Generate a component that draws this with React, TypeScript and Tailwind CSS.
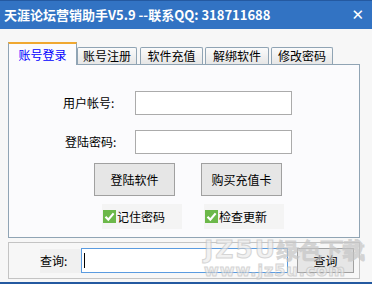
import React from 'react';

const cjk = "font-['SimSun','Noto_Sans_CJK_SC',sans-serif]";

function Tab({ label, active, className = '' }: { label: string; active?: boolean; className?: string }) {
  if (active) {
    return (
      <div className="relative z-10 -mb-px flex h-[23px] w-[69px] items-center justify-center border-x border-t-2 border-x-[#90a4b4] border-t-[#f0a830] bg-[#fbfbfd] text-[12px] text-[#0000ff]">
        {label}
      </div>
    );
  }
  return (
    <div
      className={`flex h-[17px] items-center justify-center rounded-t-[2px] border border-b-0 border-[#90a4b4] bg-gradient-to-b from-[#fbfbfb] to-[#e6e6e6] text-[12px] text-black ${className}`}
    >
      {label}
    </div>
  );
}

function Check({ label }: { label: string }) {
  return (
    <div className="flex h-[25px] w-[80px] items-center gap-[1px] bg-[#f4f4f4] pl-[1px] text-[12px] text-black">
      <svg width="13" height="13" viewBox="0 0 13 13">
        <rect x="0" y="0" width="13" height="13" fill="#6cb84a" />
        <path d="M2.5 6.8 L5.3 9.6 L10.6 3.4" fill="none" stroke="#fff" strokeWidth="2.2" />
      </svg>
      <span>{label}</span>
    </div>
  );
}

export default function App() {
  return (
    <div className={`relative flex h-[284px] w-[372px] flex-col overflow-hidden bg-[#f7f7f7] ${cjk}`}>
      {/* Title bar */}
      <div className="flex h-[29px] items-center justify-between border-t border-[#2459a0] bg-[#3273c3] pl-[4px] pr-[8px] text-white">
        <span className="text-[13px] font-bold">天涯论坛营销助手V5.9 --联系QQ: 318711688</span>
        <span className="font-['DejaVu_Sans',sans-serif] text-[15px] font-bold">✕</span>
      </div>

      <div className="flex flex-1 flex-col px-[8px] pt-[13px]">
        {/* Tabs */}
        <div className="flex items-end">
          <Tab label="账号登录" active />
          <Tab label="账号注册" className="w-[60px]" />
          <Tab label="软件充值" className="ml-[3px] w-[63px]" />
          <Tab label="解绑软件" className="ml-[2px] w-[64px]" />
          <Tab label="修改密码" className="ml-[2px] w-[62px]" />
        </div>

        {/* Panel */}
        <div className="flex h-[174px] w-[352px] flex-col border border-[#90a4b4] bg-[#fbfbfd] pl-[54px] pt-[26px]">
          <div className="flex items-center">
            <span className="w-[72px] text-[12px] text-black">用户帐号:</span>
            <div className="h-[24px] w-[157px] border border-[#ababab] bg-white" />
          </div>
          <div className="mt-[15px] flex items-center">
            <span className="w-[72px] pl-[2px] text-[12px] text-black">登陆密码:</span>
            <div className="h-[24px] w-[157px] border border-[#ababab] bg-white" />
          </div>
          <div className="ml-[31px] mt-[9px] flex gap-[26px]">
            <div className="flex h-[33px] w-[81px] items-center justify-center border border-[#a0a0a0] bg-[#e6e6e6] text-[12px] text-black">
              登陆软件
            </div>
            <div className="flex h-[33px] w-[81px] items-center justify-center border border-[#a0a0a0] bg-[#e6e6e6] text-[12px] text-black">
              购买充值卡
            </div>
          </div>
          <div className="ml-[39px] mt-[8px] flex gap-[22px]">
            <Check label="记住密码" />
            <Check label="检查更新" />
          </div>
        </div>

        {/* Query group */}
        <div className="mt-[4px] flex h-[37px] w-[352px] items-center border border-[#c4c4c4] pl-[31px]">
          <span className="flex h-[24px] w-[41px] items-center bg-[#f0f0f0] text-[12px] text-black">查询:</span>
          <div className="flex h-[25px] w-[207px] items-center border border-[#5a9be0] bg-white pl-[2px]">
            <div className="h-[15px] w-px bg-black" />
          </div>
          <div className="ml-[9px] flex h-[25px] w-[57px] items-center justify-center border border-[#a0a0a0] bg-[#e6e6e6] text-[12px] text-black">
            查询
          </div>
        </div>
      </div>

      {/* watermark */}
      <div className="pointer-events-none absolute left-[204px] top-[237px] flex flex-col items-start whitespace-nowrap leading-none text-[#ececec] opacity-70 [-webkit-text-stroke:1px_#c4c4c4]">
        <span className="font-['DejaVu_Sans',sans-serif] font-bold">
          <span className="text-[25px] tracking-[2px]">JZ5U</span>
          <span className="text-[22px]">绿色下载</span>
        </span>
        <span className="mt-[1px] font-['DejaVu_Sans',sans-serif] text-[16px] font-bold tracking-[1px]">www.jz5u.com</span>
      </div>

      <div className="h-[2px] bg-[#2459a0]" />
    </div>
  );
}
